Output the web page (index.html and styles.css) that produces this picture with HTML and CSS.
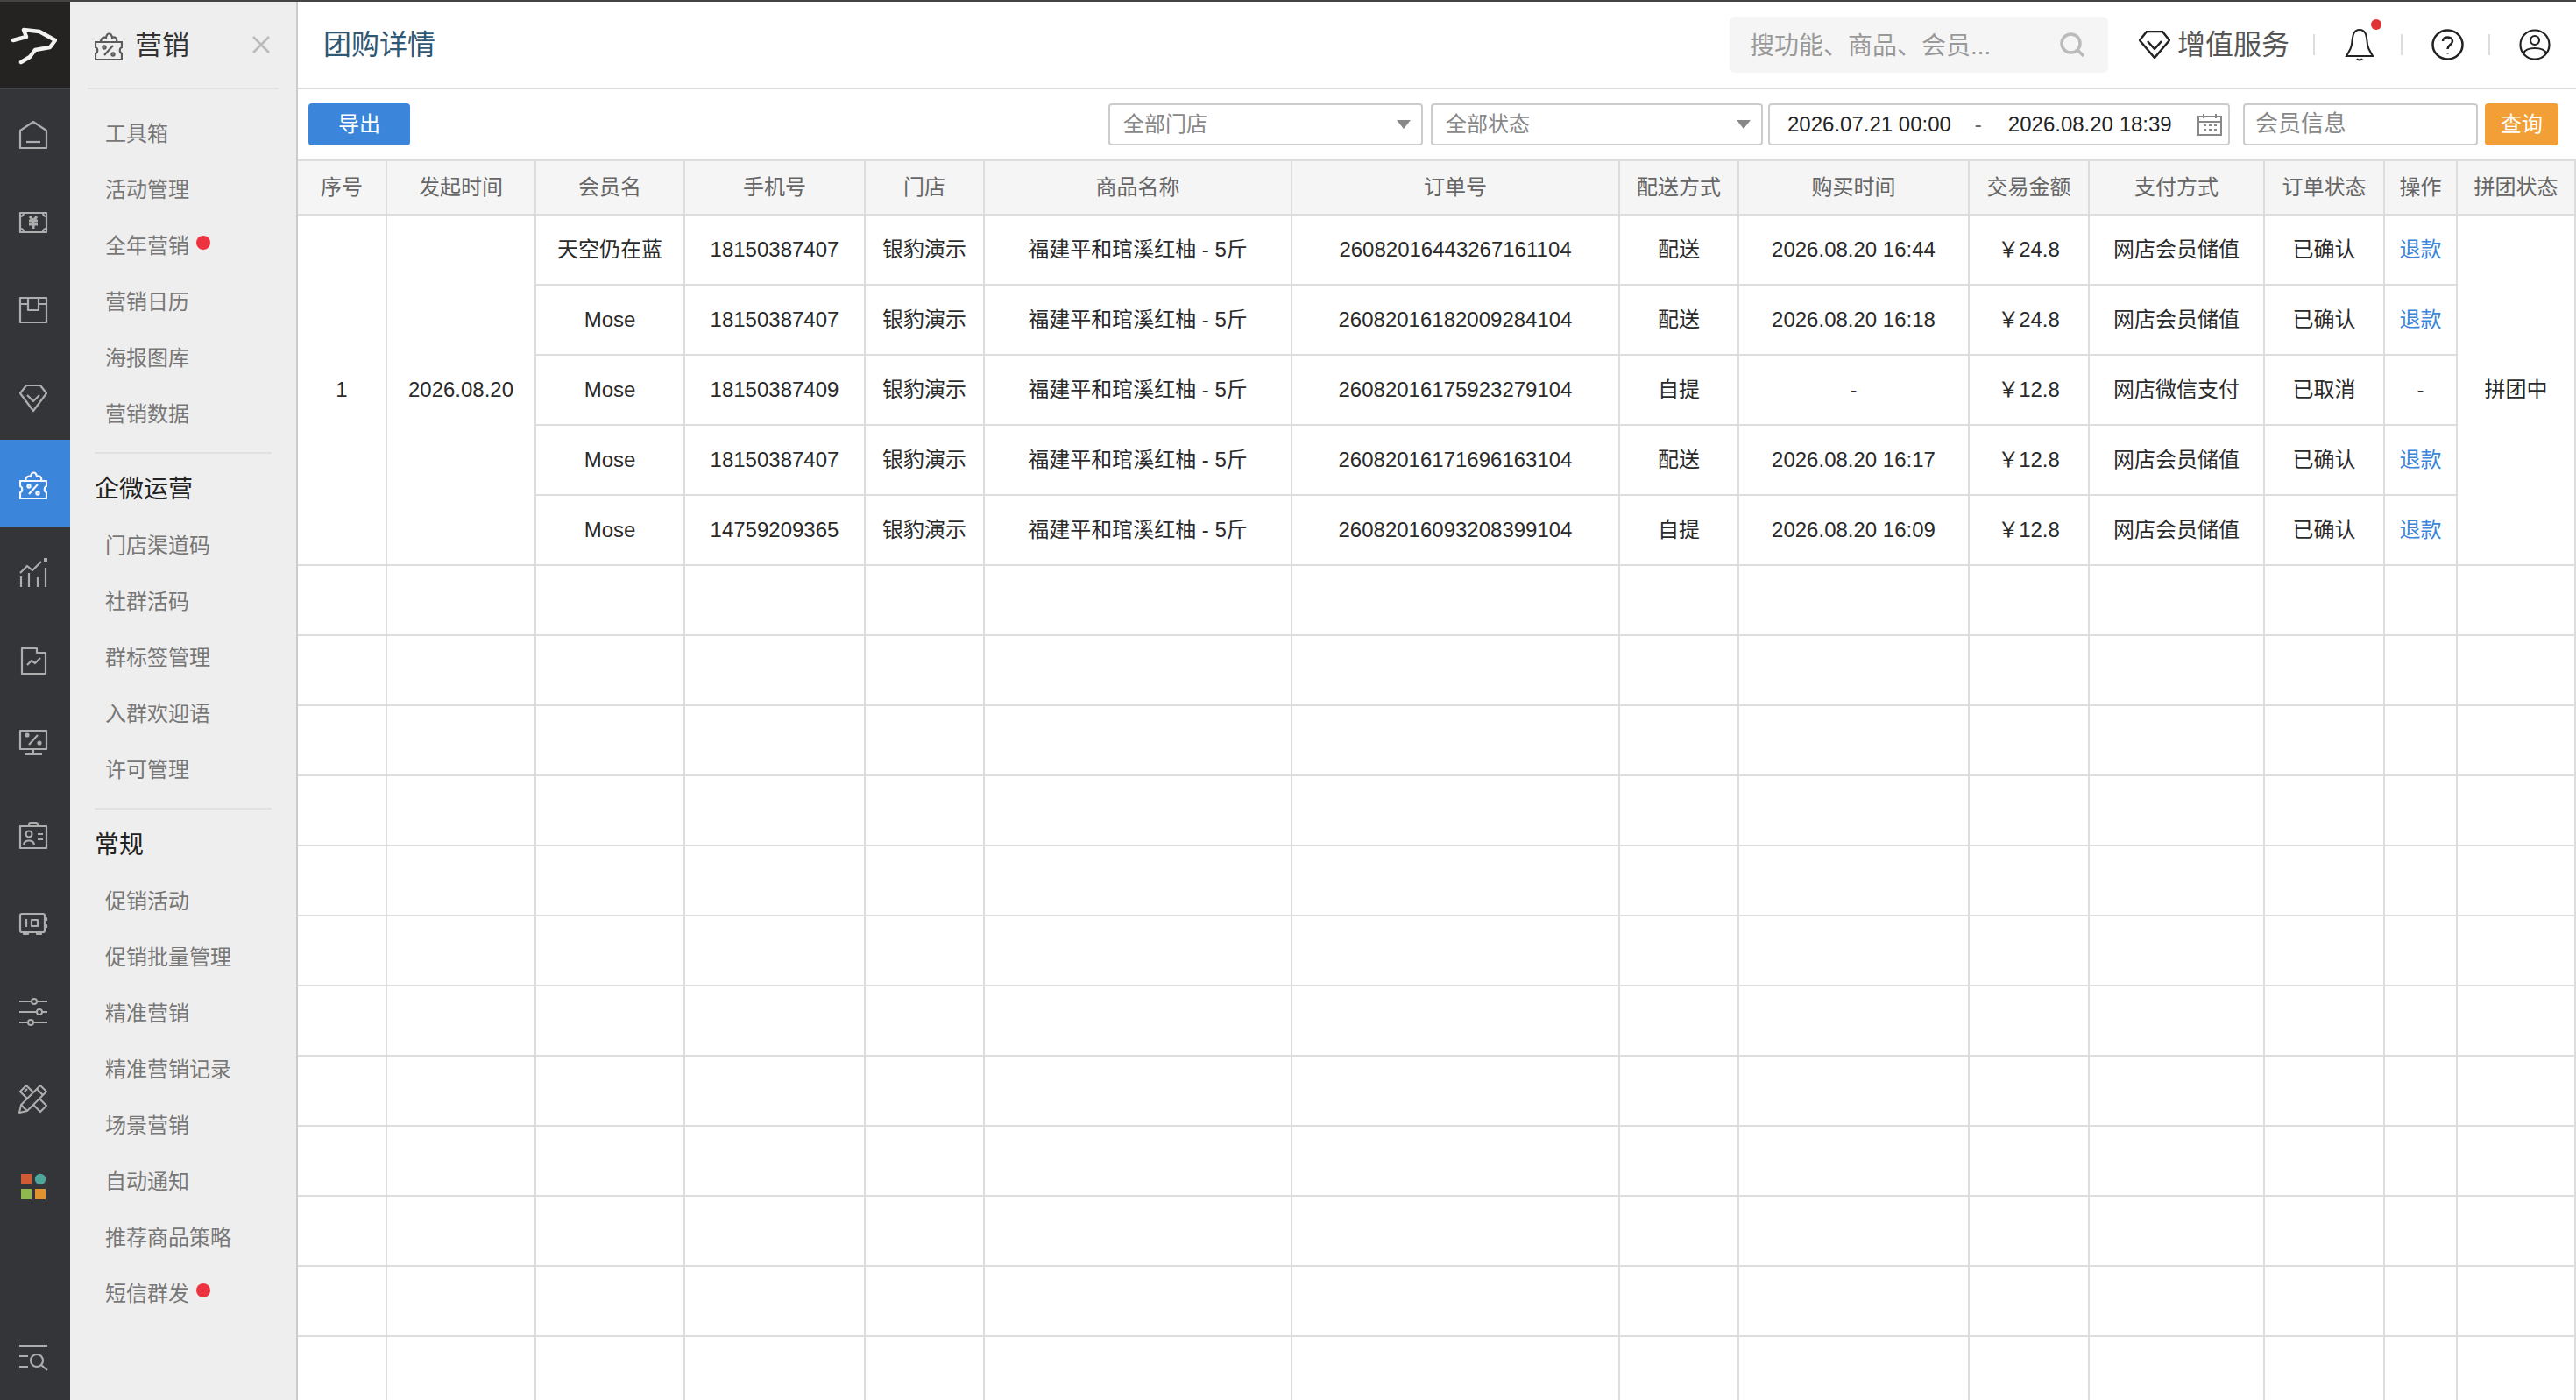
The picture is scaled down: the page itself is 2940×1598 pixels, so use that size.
FILE: index.html
```html
<!DOCTYPE html>
<html lang="zh-CN">
<head>
<meta charset="utf-8">
<title>团购详情</title>
<link rel="stylesheet" href="styles.css">
</head>
<body>
<svg class="defs" width="0" height="0" aria-hidden="true">
  <symbol id="i-mkt" viewBox="0 0 32 32">
    <path d="M1 11H31V17C28 18 28 23 31 24V31H1V24C4 23 4 18 1 17Z"/>
    <path d="M7 11C7 6 11 5 13 6C14 0 19 0 20 6C23 4 26 7 25 11"/>
    <path d="M11 26L21 15"/>
    <circle cx="11" cy="17" r="1.6"/><circle cx="21" cy="25" r="1.6"/>
  </symbol>
</svg>
<div class="app">
  <nav class="rail">
    <div class="logo">
      <svg class="logo-mark" width="52" height="44" viewBox="0 0 52 44"><path d="M2 15L17 11L14 3L32 5L50 15L44 23L27 26L21 34L11 40"/></svg>
    </div>
    <a class="rail-item"><svg class="ri" viewBox="0 0 32 32"><path d="M1 31V11L16 1L31 11V31Z"/><path d="M8 24H24"/></svg></a>
    <a class="rail-item"><svg class="ri" viewBox="0 0 32 32"><path d="M1 5H31V27H1Z"/><path d="M5 5C5 8 4 9 1 9M27 5C27 8 28 9 31 9M5 27C5 24 4 23 1 23M27 27C27 24 28 23 31 23"/><path class="thick" d="M12 9L16 14L20 9M11 14H21M11 18H21M16 14V23"/></svg></a>
    <a class="rail-item"><svg class="ri" viewBox="0 0 32 32"><path d="M1 2H31V30H1Z"/><path d="M1 9H10M22 9H31M10 2V16H22V2"/></svg></a>
    <a class="rail-item"><svg class="ri" viewBox="0 0 32 32"><path d="M8 2H24L31 11L16 31L1 11Z"/><path d="M9 13L16 20L23 13"/></svg></a>
    <a class="rail-item rail-active"><svg class="ri"><use href="#i-mkt"/></svg></a>
    <a class="rail-item"><svg class="ri" viewBox="0 0 32 32"><path d="M1 16L9 8L15 13L25 3"/><path d="M2 20V32M11 16V32M21 21V32M30 10V32"/><path class="solid" d="M28 -1H32V3H28Z"/></svg></a>
    <a class="rail-item"><svg class="ri" viewBox="0 0 32 32"><path d="M3 2H20V7H30V31H3Z"/><path d="M9 21L14 16L18 19L24 13"/></svg></a>
    <a class="rail-item"><svg class="ri" viewBox="0 0 32 32"><path d="M1 -4H31V17H1Z"/><path d="M16 17V22M6 23H26M11 12L21 1"/><circle class="solid" cx="9" cy="1" r="2.6"/><circle class="solid" cx="23" cy="10" r="2.6"/></svg></a>
    <a class="rail-item"><svg class="ri" viewBox="0 0 32 32"><path d="M1 5H31V30H1Z"/><rect x="11" y="1" width="10" height="4" rx="2"/><circle cx="11" cy="14" r="3.5"/><path d="M5 26C6 20 16 20 17 26M21 14H27M21 20H27"/></svg></a>
    <a class="rail-item"><svg class="ri" viewBox="0 0 32 32"><rect x="1" y="5" width="28" height="21" rx="2"/><path d="M5 26V28H10V26M20 26V28H25V26M29 10H31V13M29 18H31V21M8 11V20"/><rect x="14" y="12" width="7" height="7"/></svg></a>
    <a class="rail-item"><svg class="ri" viewBox="0 0 32 32"><path d="M0 5H32M0 17H32M0 29H32"/><circle class="knob" cx="17" cy="5" r="3"/><circle class="knob" cx="23" cy="17" r="3"/><circle class="knob" cx="13" cy="29" r="3"/></svg></a>
    <a class="rail-item"><svg class="ri" viewBox="0 0 32 32"><path d="M8 1L1 8L24 31L31 24Z"/><path d="M6 8L9 5"/><path class="knob" d="M24 1L31 8L9 30L0 32L2 23Z"/><path d="M2 23L9 30M20 5L27 12"/></svg></a>
    <a class="rail-item"><svg class="ri" viewBox="0 0 32 32"><rect class="a1" x="2" y="2" width="12" height="12"/><circle class="a2" cx="24" cy="8" r="6.2"/><rect class="a3" x="2" y="19" width="12" height="12"/><rect class="a4" x="18" y="19" width="12" height="12"/></svg></a>
    <a class="rail-item rail-last"><svg class="ri" viewBox="0 0 32 32"><path d="M0 2H32M0 14H10M0 26H10"/><circle cx="20" cy="19" r="7"/><path d="M25 24L32 30"/></svg></a>
  </nav>

  <aside class="side">
    <header class="side-head">
      <svg class="side-icon"><use href="#i-mkt"/></svg>
      <span class="side-title">营销</span>
      <svg class="side-close" viewBox="0 0 20 20"><path d="M1 1L19 19M19 1L1 19"/></svg>
    </header>
    <ul class="menu menu-first">
      <li>工具箱</li>
      <li>活动管理</li>
      <li>全年营销<i class="dot"></i></li>
      <li>营销日历</li>
      <li>海报图库</li>
      <li>营销数据</li>
    </ul>
    <div class="side-rule"></div>
    <h3 class="side-sec">企微运营</h3>
    <ul class="menu">
      <li>门店渠道码</li>
      <li>社群活码</li>
      <li>群标签管理</li>
      <li>入群欢迎语</li>
      <li>许可管理</li>
    </ul>
    <div class="side-rule"></div>
    <h3 class="side-sec">常规</h3>
    <ul class="menu">
      <li>促销活动</li>
      <li>促销批量管理</li>
      <li>精准营销</li>
      <li>精准营销记录</li>
      <li>场景营销</li>
      <li>自动通知</li>
      <li>推荐商品策略</li>
      <li>短信群发<i class="dot"></i></li>
    </ul>
  </aside>

  <main class="main">
    <header class="top">
      <h1 class="page-title">团购详情</h1>
      <div class="search">
        <span class="search-text">搜功能、商品、会员...</span>
        <svg class="search-ic" viewBox="0 0 28 28"><circle cx="12.500" cy="12.500" r="10.500"/><path d="M20 20L27 27"/></svg>
      </div>
      <svg class="vip-ic" viewBox="0 0 36 32"><path d="M9 1H27L35 11L18 31L1 11Z"/><path d="M10 12L18 21L26 12"/></svg>
      <span class="vip-text">增值服务</span>
      <i class="sep sep-a"></i>
      <span class="bell">
        <svg class="bell-ic" viewBox="0 0 34 38"><path d="M17 2C9 2 9 11 8 19C7 25 4 28 2 32H32C30 28 27 25 26 19C25 11 25 2 17 2Z"/><path d="M14 35C15 37 19 37 20 35"/></svg>
        <i class="bell-dot"></i>
      </span>
      <i class="sep sep-b"></i>
      <svg class="help-ic" viewBox="0 0 37 36"><ellipse cx="18.500" cy="18" rx="17" ry="16.500"/><path d="M13 14C13 8 24 8 24 14C24 18 18.500 18 18.500 23"/><path d="M18.500 27V28.500"/></svg>
      <i class="sep sep-c"></i>
      <svg class="user-ic" viewBox="0 0 36 36"><circle cx="18" cy="18" r="16.500"/><circle cx="18" cy="13" r="5"/><path d="M5 28C8 20 28 20 31 28"/></svg>
    </header>

    <div class="tools">
      <button class="btn btn-blue" type="button">导出</button>
      <div class="filters">
        <div class="field sel-store"><span class="ph">全部门店</span><i class="caret"></i></div>
        <div class="field sel-state"><span class="ph">全部状态</span><i class="caret"></i></div>
        <div class="field date">
          <span class="d1">2026.07.21 00:00</span><span class="dash">-</span><span class="d2">2026.08.20 18:39</span>
          <svg class="cal" viewBox="0 0 28 26"><path d="M1 4H27V25H1ZM1 10H27M7 1V6M21 1V6"/><path d="M7 14H10M13 14H16M19 14H22M7 19H10M13 19H16M19 19H22"/></svg>
        </div>
        <div class="field member"><span class="ph ph-lg">会员信息</span></div>
        <button class="btn btn-orange" type="button">查询</button>
      </div>
    </div>

    <table class="grid">
      <colgroup>
        <col class="c1"><col class="c2"><col class="c3"><col class="c4"><col class="c5"><col class="c6"><col class="c7"><col class="c8"><col class="c9"><col class="c10"><col class="c11"><col class="c12"><col class="c13"><col class="c14">
      </colgroup>
      <thead>
        <tr><th>序号</th><th>发起时间</th><th>会员名</th><th>手机号</th><th>门店</th><th>商品名称</th><th>订单号</th><th>配送方式</th><th>购买时间</th><th>交易金额</th><th>支付方式</th><th>订单状态</th><th>操作</th><th>拼团状态</th></tr>
      </thead>
      <tbody>
        <tr><td rowspan="5">1</td><td rowspan="5">2026.08.20</td><td>天空仍在蓝</td><td>18150387407</td><td>银豹演示</td><td>福建平和琯溪红柚 - 5斤</td><td>26082016443267161104</td><td>配送</td><td>2026.08.20 16:44</td><td>￥24.8</td><td>网店会员储值</td><td>已确认</td><td><a class="link">退款</a></td><td rowspan="5">拼团中</td></tr>
        <tr><td>Mose</td><td>18150387407</td><td>银豹演示</td><td>福建平和琯溪红柚 - 5斤</td><td>26082016182009284104</td><td>配送</td><td>2026.08.20 16:18</td><td>￥24.8</td><td>网店会员储值</td><td>已确认</td><td><a class="link">退款</a></td></tr>
        <tr><td>Mose</td><td>18150387409</td><td>银豹演示</td><td>福建平和琯溪红柚 - 5斤</td><td>26082016175923279104</td><td>自提</td><td>-</td><td>￥12.8</td><td>网店微信支付</td><td>已取消</td><td>-</td></tr>
        <tr><td>Mose</td><td>18150387407</td><td>银豹演示</td><td>福建平和琯溪红柚 - 5斤</td><td>26082016171696163104</td><td>配送</td><td>2026.08.20 16:17</td><td>￥12.8</td><td>网店会员储值</td><td>已确认</td><td><a class="link">退款</a></td></tr>
        <tr><td>Mose</td><td>14759209365</td><td>银豹演示</td><td>福建平和琯溪红柚 - 5斤</td><td>26082016093208399104</td><td>自提</td><td>2026.08.20 16:09</td><td>￥12.8</td><td>网店会员储值</td><td>已确认</td><td><a class="link">退款</a></td></tr>
        <tr><td></td><td></td><td></td><td></td><td></td><td></td><td></td><td></td><td></td><td></td><td></td><td></td><td></td><td></td></tr>
        <tr><td></td><td></td><td></td><td></td><td></td><td></td><td></td><td></td><td></td><td></td><td></td><td></td><td></td><td></td></tr>
        <tr><td></td><td></td><td></td><td></td><td></td><td></td><td></td><td></td><td></td><td></td><td></td><td></td><td></td><td></td></tr>
        <tr><td></td><td></td><td></td><td></td><td></td><td></td><td></td><td></td><td></td><td></td><td></td><td></td><td></td><td></td></tr>
        <tr><td></td><td></td><td></td><td></td><td></td><td></td><td></td><td></td><td></td><td></td><td></td><td></td><td></td><td></td></tr>
        <tr><td></td><td></td><td></td><td></td><td></td><td></td><td></td><td></td><td></td><td></td><td></td><td></td><td></td><td></td></tr>
        <tr><td></td><td></td><td></td><td></td><td></td><td></td><td></td><td></td><td></td><td></td><td></td><td></td><td></td><td></td></tr>
        <tr><td></td><td></td><td></td><td></td><td></td><td></td><td></td><td></td><td></td><td></td><td></td><td></td><td></td><td></td></tr>
        <tr><td></td><td></td><td></td><td></td><td></td><td></td><td></td><td></td><td></td><td></td><td></td><td></td><td></td><td></td></tr>
        <tr><td></td><td></td><td></td><td></td><td></td><td></td><td></td><td></td><td></td><td></td><td></td><td></td><td></td><td></td></tr>
        <tr><td></td><td></td><td></td><td></td><td></td><td></td><td></td><td></td><td></td><td></td><td></td><td></td><td></td><td></td></tr>
        <tr><td></td><td></td><td></td><td></td><td></td><td></td><td></td><td></td><td></td><td></td><td></td><td></td><td></td><td></td></tr>
      </tbody>
    </table>
  </main>
</div>
</body>
</html>
```

FILE: styles.css
```css
* { box-sizing: border-box; }
html, body { margin: 0; height: 100%; overflow: hidden; }
body {
  font-family: "Liberation Sans", "Noto Sans CJK SC", sans-serif;
  font-size: 24px;
  line-height: 1.2;
  color: #2a2a2a;
  background: #fff;
}
.defs { position: absolute; }

.app {
  display: flex;
  height: 1598px;
  border-top: 2px solid #444;
  overflow: hidden;
}

/* icon rail */
.rail {
  flex: 0 0 80px;
  display: flex;
  flex-direction: column;
  background: #333538;
}
.logo {
  flex: 0 0 100px;
  display: flex;
  align-items: center;
  justify-content: center;
  background: #242321;
  border-bottom: 2px solid #46474a;
  padding: 4px 3px 0 0;
}
.logo-mark { fill: none; stroke: #f2f2f2; stroke-width: 4.500; stroke-linejoin: round; stroke-linecap: round; }
.rail-item {
  flex: 0 0 100px;
  display: flex;
  align-items: center;
  padding: 4px 0 0 22px;
}
.rail-active { background: #3b86db; }
.rail-last { margin-top: auto; }
.ri {
  width: 32px;
  height: 32px;
  overflow: visible;
  fill: none;
  stroke: #adadad;
  stroke-width: 2.200;
  stroke-linejoin: round;
}
.rail-active .ri { stroke: #f4f8fd; }
.ri .solid { fill: #adadad; stroke: none; }
.ri .knob { fill: #333538; stroke-width: 2; }
.ri .thick { stroke-width: 3; }
.ri .a1 { fill: #d25a35; stroke: none; }
.ri .a2 { fill: #4fa59a; stroke: none; }
.ri .a3 { fill: #8fb84e; stroke: none; }
.ri .a4 { fill: #e0922f; stroke: none; }

/* side menu */
.side {
  flex: 0 0 260px;
  background: #eee;
  border-right: 2px solid #ccc;
}
.side-head {
  display: flex;
  align-items: center;
  height: 100px;
  margin: 0 20px;
  padding: 0 10px 0 8px;
  border-bottom: 2px solid #e0e0e0;
}
.side-icon {
  width: 32px;
  height: 32px;
  overflow: visible;
  fill: none;
  stroke: #5a5a5a;
  stroke-width: 2.200;
  margin-top: 4px;
}
.side-title { margin-left: 14px; font-size: 31px; color: #333; line-height: 1; }
.side-close {
  width: 20px;
  height: 20px;
  margin-left: auto;
  fill: none;
  stroke: #bbb;
  stroke-width: 2.600;
}
.menu { list-style: none; margin: 0; padding: 0 0 0 40px; }
.menu-first { margin-top: 19px; }
.menu li {
  display: flex;
  align-items: center;
  height: 64px;
  color: #777;
  font-size: 24px;
}
.dot {
  width: 16px;
  height: 16px;
  margin: -8px 0 0 8px;
  border-radius: 50%;
  background: #ee3340;
}
.side-rule { height: 2px; margin: 11px 28px 0; background: #e0e0e0; }
.side-sec {
  margin: 9px 0 0 28px;
  height: 64px;
  display: flex;
  align-items: center;
  font-size: 28px;
  font-weight: 400;
  color: #222;
}

/* main */
.main { flex: 1 1 0; min-width: 0; display: flex; flex-direction: column; }
.top {
  flex: 0 0 100px;
  display: flex;
  align-items: center;
  padding: 0 29px 0 29px;
  border-bottom: 2px solid #ddd;
}
.page-title { margin: 0 auto 0 0; font-size: 32px; font-weight: 400; color: #2f5875; }
.search {
  display: flex;
  align-items: center;
  justify-content: space-between;
  width: 432px;
  height: 64px;
  padding: 0 27px 0 23px;
  background: #f5f5f5;
  border-radius: 6px;
}
.search-text { font-size: 28px; color: #999; padding-top: 3px; }
.search-ic { width: 28px; height: 28px; fill: none; stroke: #bbb; stroke-width: 3.500; }
.vip-ic { width: 36px; height: 32px; margin-left: 35px; fill: none; stroke: #222; stroke-width: 2.500; stroke-linejoin: round; }
.vip-text { margin-left: 8px; font-size: 32px; color: #555; }
.sep { width: 2px; height: 24px; background: #ddd; }
.sep-a { margin-left: 27px; }
.sep-b { margin-left: 30px; }
.sep-c { margin-left: 28px; }
.bell { position: relative; display: flex; margin-left: 34px; }
.bell-ic { width: 34px; height: 38px; fill: none; stroke: #222; stroke-width: 2; }
.bell-dot {
  position: absolute;
  top: -10px;
  right: -8px;
  width: 12px;
  height: 12px;
  border-radius: 50%;
  background: #e03333;
}
.help-ic { width: 37px; height: 36px; margin-left: 33px; fill: none; stroke: #222; stroke-width: 2.500; }
.user-ic { width: 36px; height: 36px; margin-left: 33px; fill: none; stroke: #222; stroke-width: 2.200; }

/* toolbar */
.tools {
  flex: 0 0 80px;
  display: flex;
  padding: 16px 20px 16px 12px;
}
.btn {
  height: 48px;
  border: 0;
  border-radius: 4px;
  color: #fff;
  font: inherit;
  padding: 0;
}
.btn-blue { width: 116px; background: #3b86db; }
.btn-orange { width: 84px; margin-left: 8px; background: #f29f38; }
.filters { display: flex; margin-left: auto; }
.field {
  position: relative;
  display: flex;
  align-items: center;
  height: 48px;
  border: 2px solid #ccc;
  border-radius: 4px;
  background: #fff;
  padding-left: 15px;
}
.ph { color: #888; }
.ph-lg { font-size: 26px; }
.sel-store { width: 359px; }
.sel-state { width: 379px; margin-left: 9px; }
.date { width: 527px; margin-left: 6px; padding-left: 20px; color: #222; }
.member { width: 268px; margin-left: 15px; padding-left: 12px; }
.caret {
  margin-left: auto;
  margin-right: 12px;
  width: 0;
  height: 0;
  border-left: 8px solid transparent;
  border-right: 8px solid transparent;
  border-top: 10px solid #888;
}
.dash { margin-left: 27px; color: #666; }
.d2 { margin-left: 30px; }
.cal {
  width: 28px;
  height: 26px;
  margin-left: auto;
  margin-right: 7px;
  fill: none;
  stroke: #888;
  stroke-width: 2;
}

/* table */
.grid {
  width: 2600px;
  table-layout: fixed;
  border-collapse: separate;
  border-spacing: 0;
  text-align: center;
}
.grid .c1 { width: 102px; }
.grid .c2 { width: 170px; }
.grid .c3 { width: 170px; }
.grid .c4 { width: 206px; }
.grid .c5 { width: 136px; }
.grid .c6 { width: 351px; }
.grid .c7 { width: 374px; }
.grid .c8 { width: 136px; }
.grid .c9 { width: 263px; }
.grid .c10 { width: 137px; }
.grid .c11 { width: 200px; }
.grid .c12 { width: 137px; }
.grid .c13 { width: 83px; }
.grid .c14 { width: 135px; }
.grid th {
  height: 64px;
  padding: 0;
  font-weight: 400;
  color: #666;
  background: #f5f5f5;
  border-top: 2px solid #ddd;
  border-right: 2px solid #ddd;
  border-bottom: 2px solid #ddd;
}
.grid td {
  height: 80px;
  padding: 0;
  border-right: 2px solid #ddd;
  border-bottom: 2px solid #ddd;
}
.link { color: #3b86db; }
```
